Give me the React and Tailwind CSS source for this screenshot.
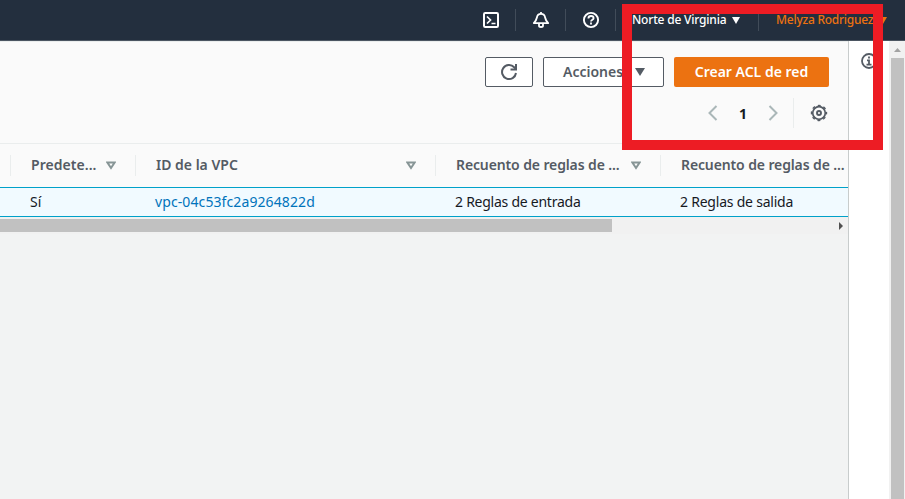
import React from "react";

function NavDivider() {
  return <div className="h-[22px] w-px shrink-0 bg-[#414c59]" />;
}

function SortIcon() {
  return (
    <svg width="10" height="9" viewBox="0 0 10 9" className="shrink-0" fill="none" stroke="#879596" strokeWidth="2">
      <path d="M1.4 1.5h7.2L5 7z" />
    </svg>
  );
}

function HeaderCell({ width, label, tracking, sort = true }) {
  return (
    <div className={`flex h-[42px] shrink-0 items-center ${width}`}>
      <div className="h-[21px] w-px shrink-0 bg-[#eaeded]" />
      <span className={`ml-5 flex-1 whitespace-nowrap pb-px font-semibold text-[#545b64] ${tracking}`}>{label}</span>
      {sort && <div className="mr-[19px]"><SortIcon /></div>}
    </div>
  );
}

function TopBar() {
  return (
    <header className="flex h-[41px] shrink-0 items-center border-b border-[#4b5561] bg-[#232f3e] pl-[482px] text-[12px] font-medium">
      <svg width="18" height="18" viewBox="0 0 18 18" fill="none" stroke="#fff" strokeWidth="2" className="shrink-0">
        <rect x="2" y="2" width="14" height="14" rx="1.2" />
        <path d="M5 5.5L8.5 9 5 12.5M9.5 12.5h4" strokeWidth="1.7" />
      </svg>
      <div className="ml-[15px]"><NavDivider /></div>
      <svg width="18" height="18" viewBox="0 0 18 18" fill="none" stroke="#fff" strokeWidth="1.8" className="ml-4 shrink-0">
        <path d="M1.8 12.1C4 9.8 4.5 8.8 4.9 6.5 5.3 4 6.8 2.9 9 2.9s3.7 1.1 4.1 3.6c.4 2.3.9 3.3 3.1 5.6z" strokeLinejoin="round" />
        <path d="M9 1v2M7 12.5v2.2Q7 16 9 16t2-1.3v-2.2" />
      </svg>
      <div className="ml-[15px]"><NavDivider /></div>
      <svg width="18" height="18" viewBox="0 0 18 18" fill="none" stroke="#fff" strokeWidth="1.9" className="ml-4 shrink-0">
        <circle cx="9" cy="9" r="7.1" />
        <path d="M6.4 7.4C6.4 5.8 7.5 5 9 5s2.6.9 2.6 2.2c0 1.6-2.6 1.5-2.6 3.4M9 11.6v1.8" strokeWidth="1.8" />
      </svg>
      <div className="ml-[15px]"><NavDivider /></div>
      <span className="ml-4 w-[95px] whitespace-nowrap tracking-[-0.19px] text-white">Norte de Virginia</span>
      <svg width="8" height="7" className="ml-[5px] shrink-0" fill="#fff"><path d="M0 0h8L4 7z" /></svg>
      <div className="ml-[18px]"><NavDivider /></div>
      <span className="ml-[17px] w-[98px] whitespace-nowrap tracking-[-0.25px] text-[#ec7211]">Melyza Rodriguez</span>
      <svg width="8" height="7" className="ml-[5px] shrink-0" fill="#ec7211"><path d="M0 0h8L4 7z" /></svg>
    </header>
  );
}

function Toolbar() {
  return (
    <div className="h-[102px] border-b border-[#eaeded] pt-[15px]">
      <div className="flex h-[30px] justify-end gap-[10px] pr-[19px]">
        <button className="flex w-12 items-center justify-center rounded-[2px] border border-[#545b64] bg-white">
          <svg width="18" height="18" viewBox="0 0 18 18" fill="none" stroke="#545b64" strokeWidth="2">
            <path d="M16 10A7 7 0 1 1 14.2 4.3L16 6" />
            <path d="M16 1v5.5h-5.5" />
          </svg>
        </button>
        <button className="flex w-[121px] items-center rounded-[2px] border border-[#545b64] bg-white pl-[19px] font-semibold text-[#545b64]">
          <span className="w-[72px] pb-0.5 text-left">Acciones</span>
          <svg width="10" height="8" fill="#545b64"><path d="M0 0h10L5 8z" /></svg>
        </button>
        <button className="flex w-[155px] items-center justify-center whitespace-nowrap rounded-[2px] bg-[#ec7211] pb-0.5 font-semibold text-white">
          Crear ACL de red
        </button>
      </div>
      <div className="mt-[11px] flex h-[30px] items-center justify-end pr-5">
        <svg width="10" height="16" fill="none" stroke="#aab7b8" strokeWidth="2"><path d="M8.5 1L1.5 8l7 7" /></svg>
        <span className="w-[50px] text-center text-[14px] font-bold text-[#16191f]">1</span>
        <svg width="10" height="16" fill="none" stroke="#aab7b8" strokeWidth="2"><path d="M1.5 1l7 7-7 7" /></svg>
        <div className="ml-[15px] h-[30px] w-px bg-[#eaeded]" />
        <svg width="18" height="18" viewBox="0 0 18 18" fill="none" stroke="#545b64" className="ml-4">
          <circle cx="9" cy="9" r="6.3" strokeWidth="1.7" />
          <circle cx="9" cy="9" r="7.5" strokeWidth="1.4" strokeDasharray="3 2.89" strokeDashoffset="1.5" />
          <circle cx="9" cy="9" r="2" strokeWidth="1.9" />
        </svg>
      </div>
    </div>
  );
}

function NetworkTable() {
  return (
    <div className="w-full overflow-hidden">
      <div className="flex h-[43px] pl-[10px]">
        <HeaderCell width="w-[125px]" label="Predete..." tracking="tracking-[0.05px]" />
        <HeaderCell width="w-[300px]" label="ID de la VPC" tracking="tracking-[0px]" />
        <HeaderCell width="w-[225px]" label="Recuento de reglas de ..." tracking="tracking-[-0.12px]" />
        <HeaderCell width="w-[225px]" label="Recuento de reglas de ..." tracking="tracking-[-0.12px]" sort={false} />
      </div>
      <div className="flex h-[30px] items-center whitespace-nowrap border-y border-[#00a1c9] bg-[#f1faff] pb-0.5 pl-[30px] text-[#16191f]">
        <span className="w-[125px] shrink-0">Sí</span>
        <span className="w-[300px] shrink-0 tracking-[0.1px] text-[#0073bb]">vpc-04c53fc2a9264822d</span>
        <span className="w-[225px] shrink-0 tracking-[-0.25px]">2 Reglas de entrada</span>
        <span className="shrink-0 tracking-[-0.22px]">2 Reglas de salida</span>
      </div>
      <div className="flex h-[17px] items-center justify-between bg-[#f1f1f1]">
        <div className="h-[13px] w-[612px] bg-[#c1c1c1]" />
        <svg width="4" height="8" className="mr-[5px]" fill="#505050"><path d="M0 0l4 4-4 4z" /></svg>
      </div>
    </div>
  );
}

export default function App() {
  return (
    <div className="relative flex h-[499px] w-[905px] flex-col overflow-hidden bg-[#f2f3f3] font-['Noto_Sans','Open_Sans',sans-serif] text-[14px]">
      <TopBar />
      <div className="flex min-h-0 flex-1">
        <main className="w-[849px] shrink-0 border-r border-[#c8cccc]">
          <div className="border-t border-[#eaeded] bg-[#fafafa]">
            <Toolbar />
            <NetworkTable />
          </div>
        </main>
        <aside className="w-10 shrink-0 bg-white pl-[11px] pt-[11px]">
          <svg width="18" height="18" viewBox="0 0 18 18" fill="none" stroke="#545b64" strokeWidth="1.8">
            <circle cx="9" cy="9" r="7" />
            <path d="M9 4.5v2M7 8.4h2v4M6.5 12.6h5" strokeWidth="1.8" />
          </svg>
        </aside>
        <div className="flex w-4 shrink-0 flex-col items-center bg-[#f1f1f1] pt-[7px]">
          <svg width="7" height="4" fill="#a3a3a3"><path d="M3.5 0L7 4H0z" /></svg>
          <div className="mt-[6px] w-[13px] flex-1 bg-[#c1c1c1]" />
        </div>
      </div>
      <div className="absolute left-[622px] top-1 h-[146px] w-[261px] border-[10px] border-[#ed1c24]" />
    </div>
  );
}
